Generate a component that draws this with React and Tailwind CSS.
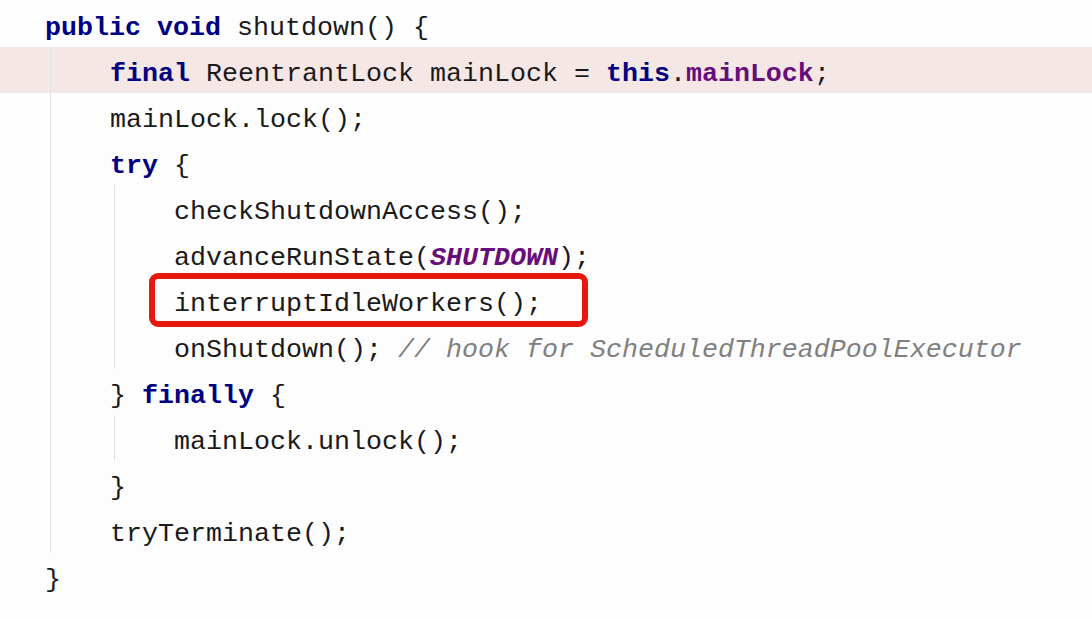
import React from "react";

const KW = ({ children }) => <span className="font-bold text-[#000080]">{children}</span>;
const FIELD = ({ children }) => <span className="font-bold text-[#660e7a]">{children}</span>;

function Guide({ w }) {
  return <div className={`h-full shrink-0 border-l border-[#e2e2e4] ${w}`} />;
}

function Row({ children, level = 0, guides = [], highlight = false, extra = null }) {
  return (
    <div className={`relative flex h-[46px] items-center ${highlight ? "bg-[#f5e7e5]" : ""}`}>
      {level === 0 ? (
        <div className="w-[45px] shrink-0" />
      ) : (
        <>
          <div className="h-full w-[50px] shrink-0" />
          {level === 1 ? (
            guides[0] ? <Guide w="w-[60px]" /> : <div className="w-[60px] shrink-0" />
          ) : (
            <>
              {guides[0] ? <Guide w="w-[64px]" /> : <div className="w-[64px] shrink-0" />}
              {guides[1] ? <Guide w="w-[60px]" /> : <div className="w-[60px] shrink-0" />}
            </>
          )}
        </>
      )}
      <span className="whitespace-pre pt-[8px]">{children}</span>
      {extra}
    </div>
  );
}

export default function App() {
  return (
    <div
      className="h-[620px] w-[1092px] overflow-hidden bg-[#fdfdfe] pt-[1px] text-[26.67px] leading-none text-[#1a1a1a]"
      style={{ fontFamily: '"Liberation Mono", "DejaVu Sans Mono", monospace' }}
    >
      <Row>
        <KW>public void</KW> shutdown() {"{"}
      </Row>
      <Row level={1} guides={[true]} highlight>
        <KW>final</KW> ReentrantLock mainLock = <KW>this</KW>.<FIELD>mainLock</FIELD>;
      </Row>
      <Row level={1} guides={[true]}>mainLock.lock();</Row>
      <Row level={1} guides={[true]}>
        <KW>try</KW> {"{"}
      </Row>
      <Row level={2} guides={[true, true]}>checkShutdownAccess();</Row>
      <Row level={2} guides={[true, true]}>
        advanceRunState(<span className="font-bold italic text-[#660e7a]">SHUTDOWN</span>);
      </Row>
      <Row
        level={2}
        guides={[true, true]}
        extra={
          <div className="absolute left-[149px] top-[-4px] h-[54px] w-[439px] rounded-[9px] border-[6px] border-[#e8180f]" />
        }
      >
        interruptIdleWorkers();
      </Row>
      <Row level={2} guides={[true, true]}>
        onShutdown(); <span className="italic text-[#808080]">// hook for ScheduledThreadPoolExecutor</span>
      </Row>
      <Row level={1} guides={[true]}>
        {"} "}
        <KW>finally</KW> {"{"}
      </Row>
      <Row level={2} guides={[true, true]}>mainLock.unlock();</Row>
      <Row level={1} guides={[true]}>{"}"}</Row>
      <Row level={1} guides={[true]}>tryTerminate();</Row>
      <Row>{"}"}</Row>
    </div>
  );
}
